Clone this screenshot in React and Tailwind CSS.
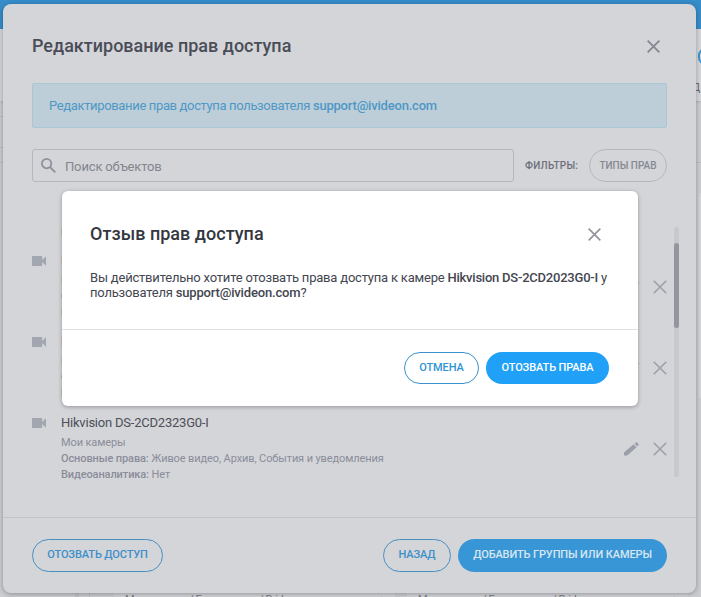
const CAMERAS = [
  { name: "Hikvision DS-2CD2023G0", group: "Мои камеры" },
  { name: "Hikvision DS-2CD2023G0-I", group: "Мои камеры" },
  { name: "Hikvision DS-2CD2123G0-I", group: "Мои камеры" },
  { name: "Hikvision DS-2CD2323G0-I", group: "Мои камеры" },
];

function CloseIcon({ className, width = 1.8 }) {
  return (
    <svg viewBox="0 0 14 14" className={className} fill="none" stroke="currentColor" strokeWidth={width}>
      <path d="M0.7 0.7 13.3 13.3M13.3 0.7 0.7 13.3" />
    </svg>
  );
}

function CameraIcon() {
  return (
    <svg viewBox="0 0 14 10" className="h-[10px] w-[14px] fill-[#a2a6b0]">
      <path d="M.8 0h8.600q.8 0 .8.800v3.200L14 .2v9.600L10.200 6v3.200q0 .8-.8.800H.8Q0 10 0 9.200V.8Q0 0 .8 0z" />
    </svg>
  );
}

function PencilIcon() {
  return (
    <svg viewBox="0 0 15 14" className="h-[14px] w-[15px] fill-[#9b9fa9]">
      <path d="M0 13.600v-3L9.600 2.200l3 3L3.200 13.600zM10.500 1.500l1.300-1.100q.7-.5 1.300.1l1.400 1.400q.6.600 0 1.200l-1.200 1.300z" />
    </svg>
  );
}

function CameraRow({ camera }) {
  return (
    <div className="flex h-[81px] shrink-0">
      <div className="w-[29px] shrink-0 pt-[7px]">
        <CameraIcon />
      </div>
      <div className="flex-1 pt-px text-[11px] leading-4 tracking-[-0.11px] whitespace-nowrap text-[#8a8d99]">
        <div className="mb-px text-[13px] leading-[22px] tracking-[-0.22px] text-[#4c4f58]">{camera.name}</div>
        <div>{camera.group}</div>
        <div>
          <b className="font-medium">Основные права:</b> Живое видео, Архив, События и уведомления
        </div>
        <div>
          <b className="font-medium">Видеоаналитика:</b> Нет
        </div>
      </div>
      <div className="flex h-[76px] items-center gap-[14px] pr-[7px] text-[#9da0aa]">
        <PencilIcon />
        <CloseIcon className="h-[14px] w-[14px]" width={1.6} />
      </div>
    </div>
  );
}

// Page that stays visible around the edges of the dialog
function Backdrop() {
  return (
    <div className="flex h-full flex-col bg-[#cbccd0]">
      <div className="h-[29px] shrink-0 bg-[#368dc9]" />
      <div className="flex h-[72px] shrink-0 flex-col items-end bg-[#d5d6da] pt-[19px] shadow">
        <div className="-mr-[12px] h-[17px] w-[15px] rounded-full border-2 border-[#3d92cd]" />
        <div className="mt-[15px] mr-px text-[10px] leading-4 text-[#5d606a]">Д</div>
      </div>
      <div className="mt-[15px] h-[31px] w-[100px] shrink-0 border-t border-[#bcbdc2]" />
      <div className="h-[15px] w-[100px] shrink-0 border-t border-[#bcbdc2]" />
      <div className="h-px shrink-0 bg-[#bcbdc2]" />
      <div className="mt-[30px] h-[205px] w-[10px] shrink-0 self-end rounded-l-xs bg-[#d5d6da] -mr-[8px]" />
      <div className="flex flex-1 items-end">
        <div className="ml-[75px] h-[12px] w-[4px] bg-[#c0c1c6]" />
        <div className="ml-[10px] mr-[24px] h-[12px] w-px bg-[#bcbdc2]" />
        {[0, 1].map((i) => (
          <div
            key={i}
            className="mr-[12px] flex h-[4px] w-[281px] shrink-0 justify-between bg-[#d2d3d7] px-[11px] text-[11px] leading-[13px] tracking-[-0.4px] text-[#777a84]"
          >
            <span>Мои камеры / Европротект / Bridge</span>
            <span>♦</span>
          </div>
        ))}
      </div>
    </div>
  );
}

function RightsDialog() {
  return (
    <div className="flex h-[589px] w-[693px] flex-col rounded-lg bg-[#d4d5d9] shadow-[0_1px_5px_rgba(0,0,0,0.3)]">
      <div className="flex h-[79px] shrink-0 items-center justify-between px-[29px] pb-px pt-[6px]">
        <h1 className="pb-[2px] text-[18px] font-medium text-[#4a4d57]">Редактирование прав доступа</h1>
        <CloseIcon className="mr-[7px] h-[13px] w-[13px] text-[#858892]" width={2} />
      </div>
      <div className="mx-[29px] flex h-[45px] shrink-0 items-center rounded-xs border border-[#a9c8d6] bg-[#bdced8] px-4 text-[13px] tracking-[-0.35px] text-[#4d98c7]">
        <span>
          Редактирование прав доступа пользователя <b className="font-medium tracking-[-0.2px]">support@ivideon.com</b>
        </span>
      </div>
      <div className="mx-[29px] mt-[21px] flex h-[33px] shrink-0 items-center">
        <div className="flex h-full w-[482px] items-center rounded-[3px] border border-[#b5b7bd] pl-2 text-[13px] tracking-[-0.15px] text-[#83868f]">
          <svg viewBox="0 0 15 15" className="mr-[9px] h-[15px] w-[15px]" fill="none" stroke="#8e919b" strokeWidth="1.800">
            <circle cx="5.600" cy="5.600" r="4.700" />
            <path d="m9 9 5.300 5.300" />
          </svg>
          <span className="pt-[2px]">Поиск объектов</span>
        </div>
        <span className="ml-[11px] flex-1 text-[10px] font-medium tracking-[0.25px] text-[#6c6f7a]">ФИЛЬТРЫ:</span>
        <button className="h-full w-[78px] rounded-full border border-[#b5b7bd] text-[10px] font-medium text-[#858892]">ТИПЫ ПРАВ</button>
      </div>
      <div className="ml-[29px] mr-[17px] mt-[45px] flex h-[290px] shrink-0 overflow-hidden">
        <div className="-mt-[59px] flex flex-1 flex-col">
          {CAMERAS.map((camera) => (
            <CameraRow key={camera.name} camera={camera} />
          ))}
        </div>
        <div className="h-[250px] w-[5px] rounded-full bg-[#c8c9cd] pt-4">
          <div className="h-[85px] rounded-full bg-[#94959f]" />
        </div>
      </div>
      <div className="flex flex-1 items-center border-t border-[#c2c3c8] px-[29px] text-[11px] font-medium tracking-[-0.12px] text-[#3c8fc8]">
        <button className="h-[33px] w-[131px] rounded-full border border-[#4690c2] pb-px">ОТОЗВАТЬ ДОСТУП</button>
        <button className="ml-auto h-[33px] w-[68px] rounded-full border border-[#4690c2] pb-px">НАЗАД</button>
        <button className="ml-[7px] h-[33px] w-[209px] rounded-full bg-[#3996d6] pb-px text-[#d8e6f0]">ДОБАВИТЬ ГРУППЫ ИЛИ КАМЕРЫ</button>
      </div>
    </div>
  );
}

function ConfirmDialog() {
  return (
    <div className="flex h-[215px] w-[576px] flex-col rounded-md bg-white shadow-[0_1px_4px_rgba(0,0,0,0.3)]">
      <div className="h-[138px] px-[28px] pt-[30px]">
        <div className="flex items-center justify-between">
          <h2 className="text-[18px] leading-[26px] font-medium tracking-[0.03px] text-[#343740]">Отзыв прав доступа</h2>
          <CloseIcon className="mr-[9px] h-[13px] w-[13px] text-[#8f929b]" width={1.7} />
        </div>
        <p className="mt-[23px] text-[13px] leading-[15px] tracking-[-0.2px] whitespace-nowrap text-[#434650]">
          Вы действительно хотите отозвать права доступа к камере{" "}
          <b className="font-medium tracking-[-0.23px]">Hikvision DS-2CD2023G0-I</b> у
          <br />
          пользователя <b className="font-medium tracking-[-0.17px]">support@ivideon.com</b>?
        </p>
      </div>
      <div className="flex flex-1 items-center justify-end gap-[7px] border-t border-[#e0e2e5] pr-[29px] text-[11px] font-medium tracking-[-0.12px]">
        <button className="h-[32px] w-[75px] rounded-full border border-[#3b93ce] text-[#2f94d6]">ОТМЕНА</button>
        <button className="h-[32px] w-[123px] rounded-full bg-[#20a0f7] text-white">ОТОЗВАТЬ ПРАВА</button>
      </div>
    </div>
  );
}

export default function App() {
  return (
    <div className="relative h-[597px] w-[701px] overflow-hidden font-[Roboto,sans-serif]">
      <Backdrop />
      <div className="absolute inset-0 pl-[3px] pt-[4px]">
        <RightsDialog />
      </div>
      <div className="absolute inset-0 pl-[62px] pt-[191px]">
        <ConfirmDialog />
      </div>
    </div>
  );
}
